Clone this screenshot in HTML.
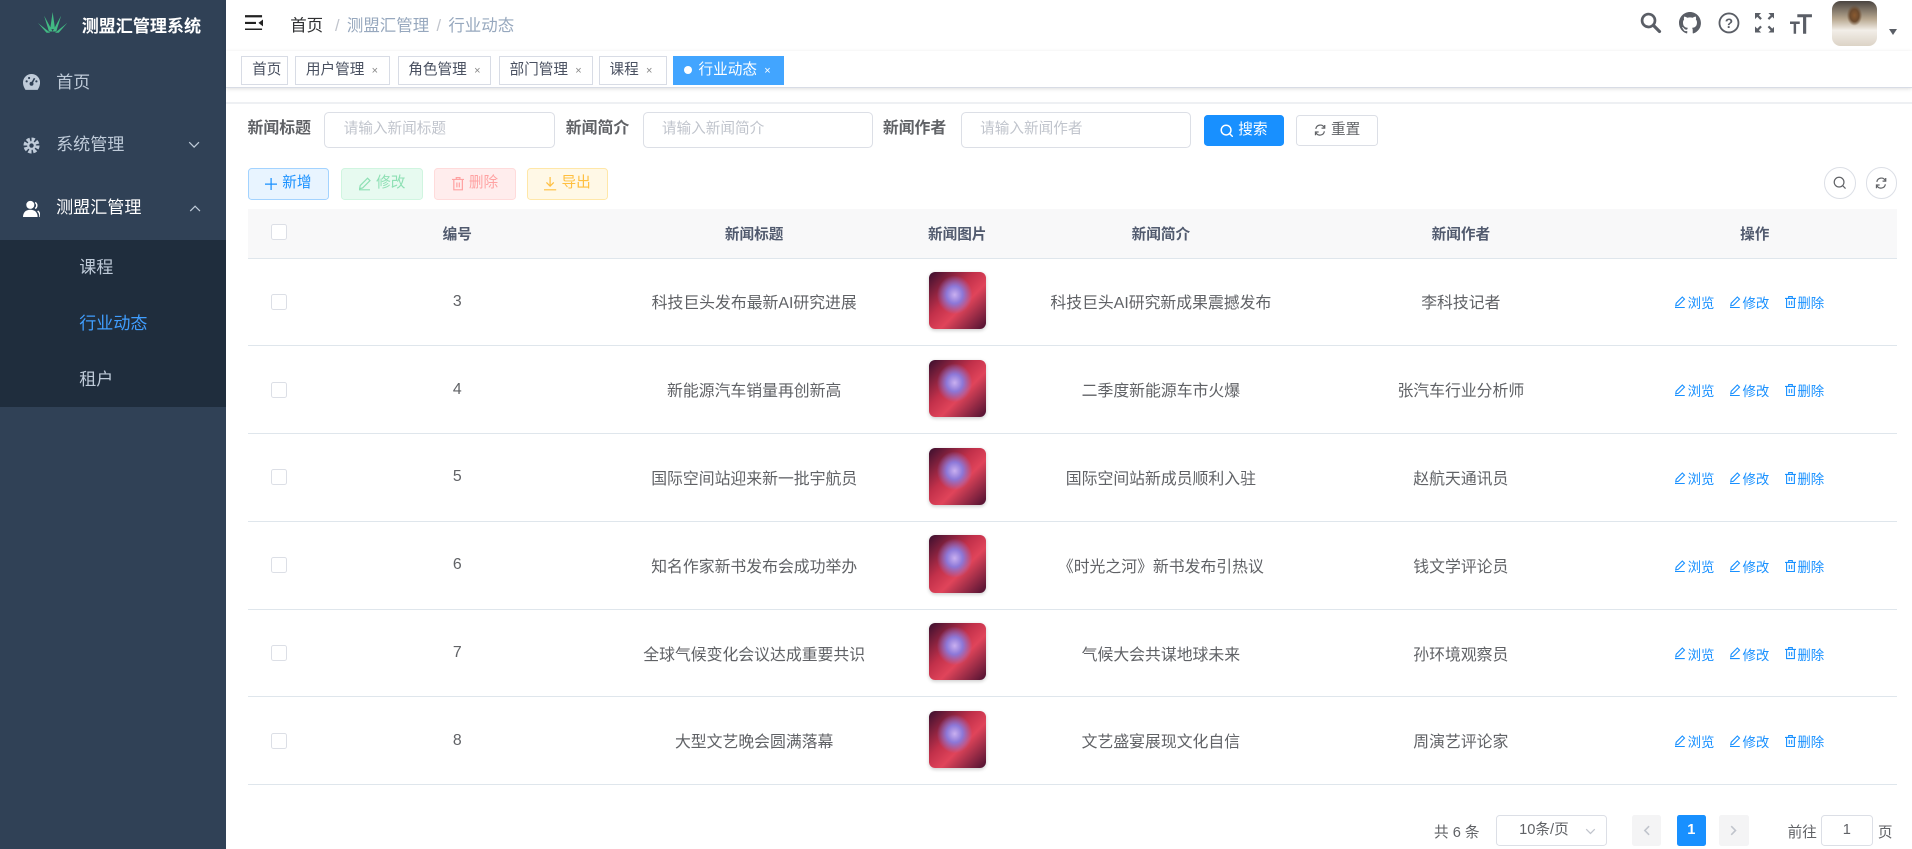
<!DOCTYPE html>
<html><head><meta charset="utf-8">
<style>
*{box-sizing:border-box;margin:0;padding:0}
html,body{width:1912px;height:849px;overflow:hidden;background:#fff}
#w{zoom:1.2194;width:1568px;height:696px;position:relative;font-family:"Liberation Sans","Noto Sans CJK SC",sans-serif;color:#606266;font-size:14px}
.abs{position:absolute}
.sb{left:0;top:0;width:185px;height:696px;background:#304156}
.sb .it{position:absolute;left:0;width:185px;height:20px;line-height:20px;color:#bfcbd9;font-size:14px}
.sub{left:0;top:197px;width:185px;height:137px;background:#1f2d3d}
.hd{left:185px;top:0;width:1383px;height:42px;background:#fff;box-shadow:0 1px 4px rgba(0,21,41,.08)}
.tags{left:185px;top:42px;width:1383px;height:30px;background:#fff;border-bottom:1px solid #d8dce5;box-shadow:0 1px 3px rgba(0,0,0,.12)}
.tag{position:absolute;top:4px;height:24px;border:1px solid #d8dce5;font-size:12px;line-height:22px;padding-left:8px;color:#495060;background:#fff}
.tag i{font-style:normal;font-size:9px;color:#888;margin-left:6px}
.lbl{font-weight:bold;font-size:13px;color:#606266;top:92px;line-height:28px}
.inp{top:92px;height:29px;border:1px solid #dcdfe6;border-radius:4px;font-size:12px;color:#c0c4cc;padding-left:15px;line-height:27px}
.btn{top:138px;height:26px;width:67px;border-radius:3px;font-size:12px;line-height:24px;text-align:center;border:1px solid;display:flex;align-items:center;justify-content:center;gap:4px}
.cb{width:13px;height:13px;border:1px solid #dcdfe6;border-radius:2px;background:#fff}
.th{top:171px;height:41px;left:203px;width:1353px;background:#f8f8f9;border-bottom:1px solid #dfe6ec}
.c{position:absolute;text-align:center;font-size:13px;top:0;height:100%;display:flex;align-items:center;justify-content:center}
.th .c{font-size:12px;font-weight:bold;color:#515a6e}
.row{left:203px;width:1353px;height:72px;border-bottom:1px solid #dfe6ec}
.img{position:absolute;width:47px;height:47px;border-radius:5px;background:radial-gradient(ellipse at 45% 40%,#c9b0f0 0,#8d78d8 18%,rgba(141,107,200,0) 40%),linear-gradient(135deg,#3a0f2e 0%,#c2304a 40%,#e0445a 60%,#4b1030 100%);box-shadow:0 1px 3px rgba(0,0,0,.2)}
.act{position:absolute;font-size:11px;color:#1890ff;top:0;height:72px;display:flex;align-items:center;gap:1px}
</style></head><body><div id="w">
<div class="abs sb">
 <svg class="abs" style="left:31px;top:10px" width="24" height="18" viewBox="0 0 24 18"><g fill="#42b983"><path d="M12 0 L14 14 L10 14Z"/><path d="M5 3 L12 16 L9 16Z"/><path d="M19 3 L15 16 L12 16Z"/><path d="M0 9 L10 17 L7 17Z"/><path d="M24 9 L17 17 L14 17Z"/></g></svg>
 <div class="abs" style="left:67px;top:10px;color:#fff;font-weight:bold;font-size:14px">测盟汇管理系统</div>
 <div class="it" style="top:58px"><svg class="abs" style="left:19px;top:3px" width="14" height="13" viewBox="0 0 14 13"><path d="M7 0A7 7 0 0 0 0 7c0 2.5 1 4.3 2 6h10c1-1.7 2-3.5 2-6A7 7 0 0 0 7 0z" fill="#bfcbd9"/><circle cx="7" cy="8" r="1.6" fill="#304156"/><path d="M7 8L9.5 3.5" stroke="#304156" stroke-width="1.3"/><circle cx="3" cy="6" r=".9" fill="#304156"/><circle cx="11" cy="6" r=".9" fill="#304156"/><circle cx="5" cy="3.3" r=".9" fill="#304156"/></svg><span class="abs" style="left:46px">首页</span></div>
 <div class="it" style="top:109px"><svg class="abs" style="left:19px;top:3px" width="14" height="14" viewBox="0 0 14 14"><circle cx="7" cy="7" r="5" fill="none" stroke="#bfcbd9" stroke-width="3.2" stroke-dasharray="2.6 1.3"/><circle cx="7" cy="7" r="3.6" fill="#bfcbd9"/><circle cx="7" cy="7" r="1.8" fill="#304156"/></svg><span class="abs" style="left:46px">系统管理</span><svg class="abs" style="left:154px;top:7px" width="10" height="6" viewBox="0 0 10 6"><path d="M1 1l4 4 4-4" fill="none" stroke="#bfcbd9" stroke-width="1"/></svg></div>
 <div class="it" style="top:161px"><svg class="abs" style="left:19px;top:3px" width="14" height="14" viewBox="0 0 14 14"><circle cx="6" cy="4" r="3.3" fill="#fff"/><path d="M0 14c0-4 2.5-6 6-6s6 2 6 6z" fill="#fff"/><path d="M10 2a3 3 0 0 1 0 5M12 9c1.3 1 2 2.5 2 5" fill="none" stroke="#fff" stroke-width="1.2"/></svg><span class="abs" style="left:46px;color:#fff">测盟汇管理</span><svg class="abs" style="left:155px;top:7px" width="10" height="6" viewBox="0 0 10 6"><path d="M1 5l4-4 4 4" fill="none" stroke="#bfcbd9" stroke-width="1"/></svg></div>
 <div class="abs sub"></div>
 <div class="it" style="top:210px"><span class="abs" style="left:65px">课程</span></div>
 <div class="it" style="top:256px"><span class="abs" style="left:65px;color:#409eff">行业动态</span></div>
 <div class="it" style="top:302px"><span class="abs" style="left:65px">租户</span></div>
</div>
<div class="abs hd">
 <svg class="abs" style="left:16px;top:12px" width="15" height="13" viewBox="0 0 15 13"><path d="M0 1h14M0 6.5h9M0 12h14" stroke="#222" stroke-width="1.8"/><path d="M15 3.5 L11 6.5 L15 9.5Z" fill="#222"/></svg>
 <div class="abs" style="left:53px;top:10px;font-size:13.5px;color:#303133">首页 <span style="color:#c0c4cc;margin:0 6px">/</span><span style="color:#97a8be">测盟汇管理</span><span style="color:#c0c4cc;margin:0 6px">/</span><span style="color:#97a8be">行业动态</span></div>
 <svg class="abs" style="left:1160px;top:10px" width="18" height="18" viewBox="0 0 18 18"><circle cx="7" cy="7" r="5.3" fill="none" stroke="#5a5e66" stroke-width="2.2"/><path d="M11 11l5 5" stroke="#5a5e66" stroke-width="2.6" stroke-linecap="round"/></svg>
 <svg class="abs" style="left:1192px;top:10px" width="18" height="18" viewBox="0 0 16 16"><path fill="#5a5e66" d="M8 0C3.58 0 0 3.580 0 8c0 3.54 2.29 6.53 5.47 7.59.4.07.55-.17.55-.38v-1.33c-2.23.48-2.7-1.070-2.7-1.07-.36-.92-.89-1.17-.89-1.17-.73-.5.05-.49.05-.49.8.06 1.23.83 1.23.83.72 1.22 1.87.87 2.33.66.07-.52.28-.87.51-1.07-1.78-.2-3.64-.89-3.64-3.95 0-.87.31-1.59.82-2.15-.08-.2-.36-1.02.08-2.12 0 0 .67-.21 2.2.82a7.6 7.6 0 014 0c1.53-1.04 2.2-.82 2.2-.82.44 1.1.16 1.92.08 2.12.51.56.82 1.27.82 2.15 0 3.07-1.87 3.75-3.65 3.95.29.25.54.73.54 1.48v2.2c0 .21.15.46.55.38A8 8 0 0016 8c0-4.42-3.58-8-8-8z"/></svg>
 <svg class="abs" style="left:1224px;top:10px" width="18" height="18" viewBox="0 0 18 18"><circle cx="9" cy="9" r="7.8" fill="none" stroke="#5a5e66" stroke-width="1.5"/><text x="9" y="13.2" text-anchor="middle" font-size="11" font-weight="bold" fill="#5a5e66" font-family="Liberation Sans">?</text></svg>
 <svg class="abs" style="left:1254px;top:11px" width="16" height="16" viewBox="0 0 16 16" fill="#5a5e66"><path d="M0 0h5L0 5zM16 0v5L11 0zM0 16v-5l5 5zM16 16h-5l5-5z"/><path d="M2 2l3 3M14 2l-3 3M2 14l3-3M14 14l-3-3" stroke="#5a5e66" stroke-width="1.8"/></svg>
 <svg class="abs" style="left:1283px;top:11px" width="18" height="18" viewBox="0 0 18 18" fill="#5a5e66"><path d="M6 1h12v2.5h-4.7V17h-2.6V3.5H6zM0 7h8v2H5v8H3V9H0z"/></svg>
 <div class="abs" style="left:1317px;top:1px;width:37px;height:37px;border-radius:7px;background:radial-gradient(ellipse at 50% 32%,#8a5a30 0,#6b4a2e 14%,rgba(0,0,0,0) 24%),linear-gradient(180deg,#4a4440 0%,#b8a890 40%,#f2eee8 65%,#dcd3c6 100%)"></div>
 <div class="abs" style="left:1364px;top:24px;width:0;height:0;border-left:4px solid transparent;border-right:4px solid transparent;border-top:5px solid #5a5e66"></div>
</div>
<div class="abs tags">
 <div class="tag" style="left:13px;width:38px">首页</div>
 <div class="tag" style="left:57px;width:78px">用户管理<i>×</i></div>
 <div class="tag" style="left:141px;width:77px">角色管理<i>×</i></div>
 <div class="tag" style="left:224px;width:77px">部门管理<i>×</i></div>
 <div class="tag" style="left:306px;width:56px">课程<i>×</i></div>
 <div class="tag" style="left:367px;width:91px;background:#42a5ff;border-color:#42a5ff;color:#fff"><span style="display:inline-block;width:7px;height:7px;border-radius:50%;background:#fff;margin-right:5px;vertical-align:0"></span>行业动态<i style="color:#fff">×</i></div>
</div>
<div class="abs" style="left:185px;top:84px;width:1383px;height:1px;background:#eef0f3"></div>
<div class="abs lbl" style="left:203px">新闻标题</div>
<div class="abs inp" style="left:266px;width:189px">请输入新闻标题</div>
<div class="abs lbl" style="left:464px">新闻简介</div>
<div class="abs inp" style="left:527px;width:189px">请输入新闻简介</div>
<div class="abs lbl" style="left:724px">新闻作者</div>
<div class="abs inp" style="left:788px;width:189px">请输入新闻作者</div>
<div class="abs btn" style="top:94px;left:987px;width:66px;background:#1890ff;border-color:#1890ff;color:#fff"><svg width="11" height="11" viewBox="0 0 11 11"><circle cx="5" cy="5" r="4" fill="none" stroke="#fff" stroke-width="1.2"/><path d="M8 8l2.5 2.5" stroke="#fff" stroke-width="1.2"/></svg>搜索</div>
<div class="abs btn" style="top:94px;left:1063px;width:67px;background:#fff;border-color:#dcdfe6;color:#606266"><svg width="10" height="10" viewBox="0 0 10 10"><path d="M1.5 4A3.7 3.7 0 0 1 8.5 3M8.5 6A3.7 3.7 0 0 1 1.5 7" fill="none" stroke="#606266" stroke-width="1"/><path d="M8.8 0.8v2.6H6.2M1.2 9.2V6.6h2.6" fill="none" stroke="#606266" stroke-width="1"/></svg>重置</div>
<div class="abs btn" style="left:203px;background:#e8f4ff;border-color:#a3d3ff;color:#1890ff"><svg width="10" height="10"><path d="M5 0v10M0 5h10" stroke="#1890ff"/></svg>新增</div>
<div class="abs btn" style="left:280px;background:#e7faf0;border-color:#d0f5e0;color:#8ee0b4"><svg width="10" height="11" viewBox="0 0 10 11"><path d="M7 1l2 2-6 6-2.5.6L1 7z M0 10.5h9" fill="none" stroke="#8ee0b4"/></svg>修改</div>
<div class="abs btn" style="left:356px;background:#ffeded;border-color:#ffdbdb;color:#ffa2a2"><svg width="10" height="11" viewBox="0 0 10 11"><path d="M0 2h10M3.5 2V.5h3V2M1.5 2v8.5h7V2M4 4.5v4M6 4.5v4" fill="none" stroke="#ffa2a2"/></svg>删除</div>
<div class="abs btn" style="left:432px;background:#fff8e6;border-color:#ffe7a8;color:#ffbf3f"><svg width="10" height="11" viewBox="0 0 10 11"><path d="M5 0v7M2 4.5L5 7.5 8 4.5M0 10.5h10" fill="none" stroke="#ffbf3f"/></svg>导出</div>
<div class="abs" style="left:1496px;top:137px;width:26px;height:26px;border:1px solid #dcdfe6;border-radius:50%;display:flex;align-items:center;justify-content:center"><svg width="11" height="11" viewBox="0 0 11 11"><circle cx="5" cy="5" r="4" fill="none" stroke="#606266"/><path d="M8 8l2.3 2.3" stroke="#606266"/></svg></div>
<div class="abs" style="left:1530px;top:137px;width:26px;height:26px;border:1px solid #dcdfe6;border-radius:50%;display:flex;align-items:center;justify-content:center"><svg width="10" height="10" viewBox="0 0 10 10"><path d="M1.5 4A3.7 3.7 0 0 1 8.5 3M8.5 6A3.7 3.7 0 0 1 1.5 7" fill="none" stroke="#606266" stroke-width="1"/><path d="M8.8 0.8v2.6H6.2M1.2 9.2V6.6h2.6" fill="none" stroke="#606266" stroke-width="1"/></svg></div>
<div class="abs th">
 <div class="abs cb" style="left:19px;top:13px"></div>
 <div class="c" style="left:50px;width:244px">编号</div>
 <div class="c" style="left:294px;width:243px">新闻标题</div>
 <div class="c" style="left:537px;width:90px">新闻图片</div>
 <div class="c" style="left:627px;width:244px">新闻简介</div>
 <div class="c" style="left:871px;width:248px">新闻作者</div>
 <div class="c" style="left:1119px;width:234px">操作</div>
</div>
<div id="rows"></div>
<div class="abs" style="left:1176px;top:673px;font-size:12px">共 6 条</div>
<div class="abs" style="left:1227px;top:668px;width:91px;height:26px;border:1px solid #dcdfe6;border-radius:3px;font-size:12px;line-height:24px;padding-left:18px">10条/页<svg style="position:absolute;right:8px;top:10px" width="9" height="6" viewBox="0 0 9 6"><path d="M1 1l3.5 3.5L8 1" fill="none" stroke="#c0c4cc"/></svg></div>
<div class="abs" style="left:1338px;top:668px;width:24px;height:26px;background:#f4f4f5;border-radius:2px;display:flex;align-items:center;justify-content:center"><svg width="6" height="9"><path d="M5 1L1.5 4.5 5 8" fill="none" stroke="#c0c4cc" stroke-width="1.3"/></svg></div>
<div class="abs" style="left:1375px;top:668px;width:24px;height:26px;background:#1890ff;border-radius:2px;text-align:center;line-height:26px;color:#fff;font-weight:bold;font-size:12px">1</div>
<div class="abs" style="left:1410px;top:668px;width:24px;height:26px;background:#f4f4f5;border-radius:2px;display:flex;align-items:center;justify-content:center"><svg width="6" height="9"><path d="M1 1l3.5 3.5L1 8" fill="none" stroke="#c0c4cc" stroke-width="1.3"/></svg></div>
<div class="abs" style="left:1466px;top:673px;font-size:12px">前往</div>
<div class="abs" style="left:1493px;top:668px;width:43px;height:26px;border:1px solid #dcdfe6;border-radius:3px;text-align:center;font-size:12px;line-height:24px">1</div>
<div class="abs" style="left:1540px;top:673px;font-size:12px">页</div>
<script>
var d=[["3","科技巨头发布最新AI研究进展","科技巨头AI研究新成果震撼发布","李科技记者"],["4","新能源汽车销量再创新高","二季度新能源车市火爆","张汽车行业分析师"],["5","国际空间站迎来新一批宇航员","国际空间站新成员顺利入驻","赵航天通讯员"],["6","知名作家新书发布会成功举办","《时光之河》新书发布引热议","钱文学评论员"],["7","全球气候变化会议达成重要共识","气候大会共谋地球未来","孙环境观察员"],["8","大型文艺晚会圆满落幕","文艺盛宴展现文化自信","周演艺评论家"]];
var pen='<svg width="9" height="10" viewBox="0 0 9 10"><path d="M6 .8l1.8 1.8-5 5-2.2.5.4-2.2z M0 9.5h8" fill="none" stroke="#1890ff" stroke-width=".9"/></svg>';
var del='<svg width="9" height="10" viewBox="0 0 9 10"><path d="M0 2h9M3 2V.5h3V2M1.3 2v7.5h6.4V2M3.5 4v3.5M5.5 4v3.5" fill="none" stroke="#1890ff" stroke-width=".9"/></svg>';
var h="";d.forEach(function(r,i){var t=212+i*72;h+='<div class="abs row" style="top:'+t+'px"><div class="abs cb" style="left:19px;top:29px"></div><div class="c" style="left:50px;width:244px">'+r[0]+'</div><div class="c" style="left:294px;width:243px">'+r[1]+'</div><div class="img" style="left:559px;top:11px"></div><div class="c" style="left:627px;width:244px">'+r[2]+'</div><div class="c" style="left:871px;width:248px">'+r[3]+'</div><div class="act" style="left:1171px">'+pen+'浏览</div><div class="act" style="left:1216px">'+pen+'修改</div><div class="act" style="left:1261px">'+del+'删除</div></div>'});
document.getElementById("rows").innerHTML=h;
</script>
</div></body></html>
